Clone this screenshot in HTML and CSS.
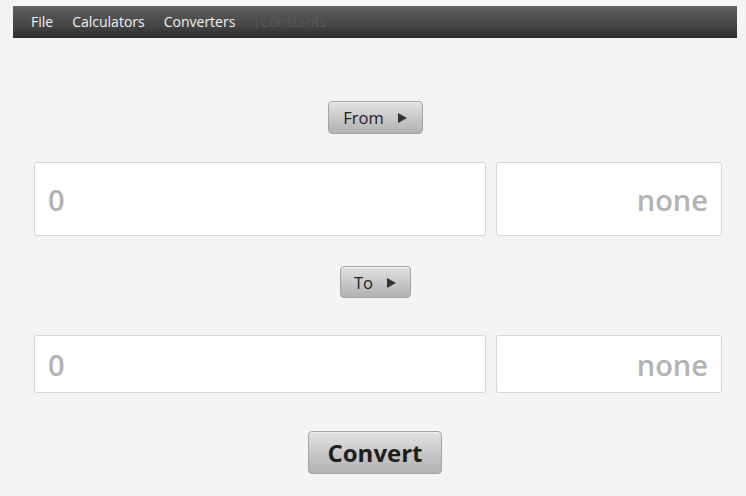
FILE: index.html
```html
<!DOCTYPE html>
<html>
<head>
<meta charset="utf-8">
<link rel="stylesheet" href="styles.css">
</head>
<body>
<div class="app">
  <nav class="menubar">
    <span class="menu">File</span>
    <span class="menu">Calculators</span>
    <span class="menu">Converters</span>
    <span class="sep"></span>
    <span class="menu disabled">Constants</span>
  </nav>
  <main class="content">
    <div class="row-btn from-row">
      <button class="menu-btn from">From <span class="tri"></span></button>
    </div>
    <div class="fields tall">
      <div class="field value">0</div>
      <div class="field unit">none</div>
    </div>
    <div class="row-btn to-row">
      <button class="menu-btn to">To <span class="tri"></span></button>
    </div>
    <div class="fields short">
      <div class="field value">0</div>
      <div class="field unit">none</div>
    </div>
    <div class="row-btn convert-row">
      <button class="convert">Convert</button>
    </div>
  </main>
</div>
</body>
</html>
```
FILE: styles.css
```css
html, body {
  margin: 0;
  padding: 0;
  background: #f4f4f4;
  font-family: "Open Sans", "Liberation Sans", sans-serif;
}
.app {
  width: 746px;
  height: 496px;
  padding-top: 6px;
  box-sizing: border-box;
}
.menubar {
  margin-left: 13px;
  width: 724px;
  height: 32px;
  box-sizing: border-box;
  background: linear-gradient(#6a6a6a 0, #5c5c5c 6%, #464646 60%, #2c2c2c 100%);
  display: flex;
  align-items: center;
  padding-left: 18px;
  padding-bottom: 1px;
  color: #f2f2f2;
  font-size: 14px;
}
.menu {
  margin-right: 19px;
}
.sep {
  width: 0;
  height: 14px;
  border-left: 1px dotted #5a5a5a;
  margin-left: 2px;
  margin-right: 3px;
}
.menu.disabled {
  color: #585858;
}
.content {
  display: flex;
  flex-direction: column;
  padding-left: 34px;
  padding-right: 24px;
}
.row-btn {
  display: flex;
  justify-content: center;
  margin-left: -21px;
  margin-right: -15px;
}
.from-row { margin-top: 63px; }
.to-row { margin-top: 30px; }
.convert-row { margin-top: 38px; }
.menu-btn, .convert {
  font-family: "Open Sans", "Liberation Sans", sans-serif;
  border: 1px solid #a3a3a3;
  border-radius: 4px;
  background: linear-gradient(#e2e2e2, #c4c4c4 60%, #b2b2b2);
  color: #222;
  box-shadow: inset 0 1px 0 rgba(255,255,255,0.55);
  display: flex;
  align-items: center;
  justify-content: center;
  padding: 0;
}
.menu-btn {
  height: 33px;
  font-size: 16.5px;
}
.from { width: 95px; }
.to { width: 71px; height: 32px; }
.tri {
  width: 0;
  height: 0;
  border-left: 9px solid #333;
  border-top: 5px solid transparent;
  border-bottom: 5px solid transparent;
  margin-left: 14px;
  margin-top: 1px;
}
.fields {
  display: flex;
  gap: 10px;
}
.fields.tall { margin-top: 28px; height: 74px; }
.fields.short { margin-top: 37px; height: 58px; }
.field {
  background: #fff;
  border: 1px solid #d6d6d6;
  border-radius: 3px;
  box-sizing: border-box;
  display: flex;
  align-items: center;
  color: #b3b3b3;
  font-weight: 600;
  font-size: 29px;
  padding: 0 13px;
}
.field.value { width: 452px; }
.field.unit { width: 226px; justify-content: flex-end; }
.convert {
  width: 134px;
  height: 43px;
  font-size: 24px;
  font-weight: 700;
  color: #1e1e1e;
}
```
